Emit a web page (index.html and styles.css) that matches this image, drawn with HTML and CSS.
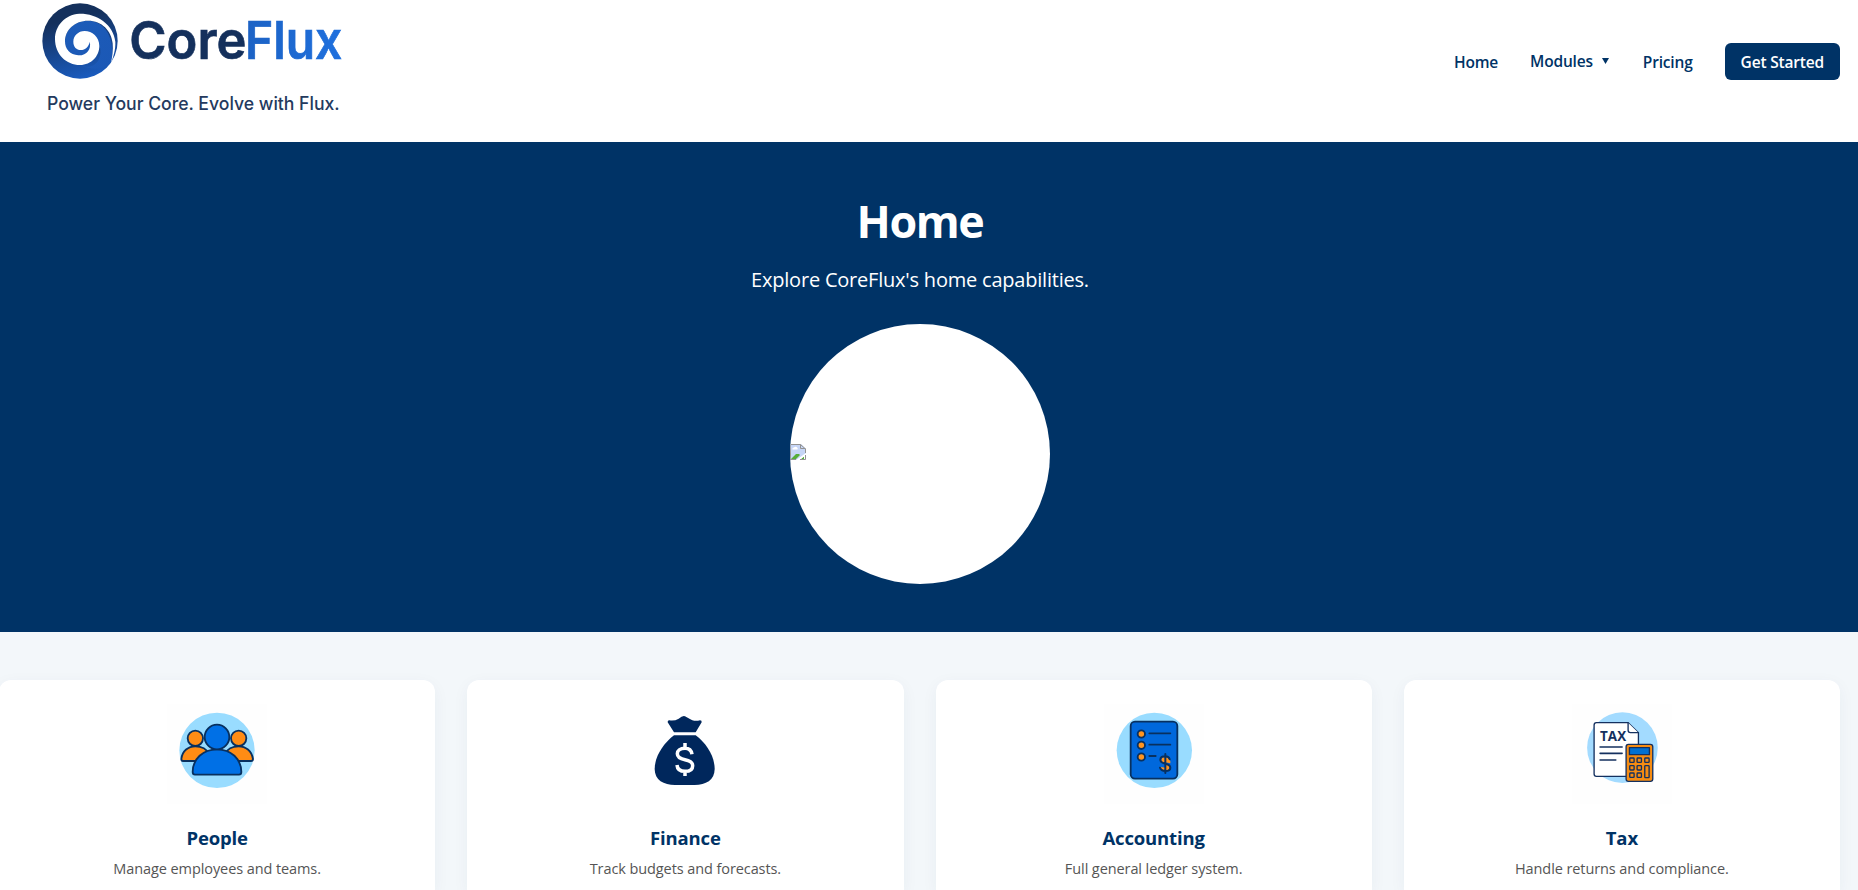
FILE: index.html
```html
<!DOCTYPE html>
<html lang="en">
<head>
<meta charset="utf-8">
<title>CoreFlux</title>
<link rel="stylesheet" href="styles.css">
</head>
<body>
<header class="header">
  <svg class="logo" width="400" height="142" viewBox="0 0 1200 426" role="img" aria-label="CoreFlux">
    <defs>
      <linearGradient id="disc" x1="0.35" y1="0" x2="0.6" y2="1"><stop offset="0.2" stop-color="#14305c"/><stop offset="1" stop-color="#1a5cc0"/></linearGradient>
      <linearGradient id="flux" x1="0" y1="0" x2="1" y2="0"><stop offset="0" stop-color="#1c62c4"/><stop offset="1" stop-color="#1f70de"/></linearGradient>
      <linearGradient id="core" x1="0" y1="0" x2="1" y2="1"><stop offset="0" stop-color="#1d5cb8"/><stop offset="1" stop-color="#1b58b6"/></linearGradient>
    </defs>
    <circle cx="240" cy="123" r="113" fill="url(#disc)"/>
    <path fill="url(#core)" d="M333 186C346 120 320 62 262 62C222 62 195 92 195 125C195 150 212 167 237 166C275 180 300 160 298 135C310 170 290 215 240 195C280 215 325 205 333 186Z"/>
    <path fill="#fff" d="M332 192C340 170 347 150 346 125C340 72 290 40 238 41C194 44 165 78 165 117C165 163 199 195 240 195C274 195 298 168 298 138C298 110 276 93 254 93C234 93 220 108 220 125C220 141 230 150 242 150C256 150 267 139 269 125C275 147 260 167 235 166C210 165 195 147 195 124C195 89 225 62 264 62C306 62 334 92 338 130C340 150 337 172 332 192Z"/>
    <text class="logo-name" x="388" y="177" textLength="351" lengthAdjust="spacingAndGlyphs" fill="#14305c" stroke="#14305c">Core</text>
    <text class="logo-name" x="735" y="177" textLength="292" lengthAdjust="spacingAndGlyphs" fill="url(#flux)" stroke="url(#flux)">Flux</text>
    <text class="logo-tag" x="141" y="329" textLength="878" lengthAdjust="spacingAndGlyphs">Power Your Core. Evolve with Flux.</text>
  </svg>
  <nav class="nav">
    <a class="nav-link">Home</a>
    <a class="nav-link nav-menu">Modules<svg class="caret" width="7" height="6" viewBox="0 0 7 6"><path d="M0 0H7L3.5 6Z" fill="#003366"/></svg></a>
    <a class="nav-link">Pricing</a>
    <a class="nav-button">Get Started</a>
  </nav>
</header>
<section class="hero">
  <h1 class="hero-title">Home</h1>
  <p class="hero-text">Explore CoreFlux's home capabilities.</p>
  <div class="hero-image">
    <svg width="16" height="16" viewBox="0 0 16 16">
      <path d="M0 0H11L16 5V10L10 16H0Z" fill="#c6d5f6"/>
      <path d="M2.500 5.500a1.500 1.500 0 0 1 1.500-2 2 2 0 0 1 3.500.500a1.300 1.300 0 0 1 0 1.500Z" fill="#fff"/>
      <path d="M1 15L6 10L9 10L10 11L6 15ZM11 15L14 12.500V15Z" fill="#56ad39"/>
      <path d="M16 9L6 16H9.500L16 11Z" fill="#fff"/>
      <path d="M0.500 16V0.500H10.500L15.500 5V9M10.500 0.500V4.500H15.500M0 15.500H6M10 15.500H15.500V11" fill="none" stroke="#929292"/>
    </svg>
  </div>
</section>
<main class="cards">
  <article class="card">
    <svg class="icon" viewBox="21 12 300 300">
      <rect x="21" y="12" width="300" height="300" fill="#fefefe"/>
      <circle cx="171" cy="151" r="113" fill="#99dcff"/>
      <g stroke="#08305f" stroke-width="5.500" stroke-linejoin="round">
        <g fill="#ff8c14">
          <circle cx="106" cy="115" r="23"/><circle cx="236" cy="115" r="23"/>
          <path d="M69 183Q64 183 64 177C67 152 85 139 106 139C125 139 141 148 146 162V183Z"/>
          <path d="M273 183Q279 183 279 177C275 152 257 139 236 139C217 139 201 148 196 162V183Z"/>
        </g>
        <g fill="#0070e6">
          <path d="M105 224Q98 224 98 216C98 177 129 148 171 148S244 177 244 216Q244 224 237 224Z"/>
          <circle cx="171" cy="111" r="37"/>
        </g>
      </g>
    </svg>
    <h2 class="card-title">People</h2>
    <p class="card-text">Manage employees and teams.</p>
  </article>
  <article class="card">
    <svg class="icon" viewBox="16 12 300 300">
      <g fill="#00275c">
        <path d="M114 67Q113 61 119 61Q134 64 147 56Q159 46 166 49Q180 57 188 61Q199 64 211 61Q217 61 216 67L198 97H133Z"/>
        <path d="M133 106H198C231 130 255 170 255 207C255 240 228 255 195 255H136C102 255 75 240 75 207C75 170 101 130 133 106Z"/>
      </g>
      <path d="M187 163C185 150 177 145 166 145C151 145 143 152 143 161C143 172 151 176 166 179C181 182 189 187 189 197C189 208 180 214 166 214C152 214 143 208 142 195M166 129V146M166 213V228" fill="none" stroke="#fff" stroke-width="10.500"/>
    </svg>
    <h2 class="card-title">Finance</h2>
    <p class="card-text">Track budgets and forecasts.</p>
  </article>
  <article class="card">
    <svg class="icon" viewBox="27 12 300 300">
      <rect x="27" y="12" width="300" height="300" fill="#fefefe"/>
      <circle cx="178" cy="151" r="113" fill="#99dcff"/>
      <g stroke="#08305f" stroke-width="5.500" stroke-linecap="round">
        <rect x="107" y="65" width="140" height="171" rx="13" fill="#0068dc"/>
        <g fill="#ff9420"><circle cx="139" cy="102" r="11"/><circle cx="139" cy="136" r="11"/><circle cx="139" cy="171" r="11"/></g>
        <path d="M163 100H226M163 134H226M163 168H182"/>
        <path d="M203 172H211V188Q197 188 199 178ZM211 172Q224 174 226 184V190L211 187ZM211 194Q224 195 224 203Q224 211 211 211ZM197 201L211 203V211Q199 211 197 201Z" fill="#ff9420" stroke="none"/>
        <path d="M224 178C222 171 217 169 211 169C202 169 196 173 196 179C196 187 202 189 211 191C221 193 226 196 226 203C226 210 219 213 211 213C202 213 197 209 195 203M211 162V219" fill="none" stroke-width="6"/>
      </g>
    </svg>
    <h2 class="card-title">Accounting</h2>
    <p class="card-text">Full general ledger system.</p>
  </article>
  <article class="card">
    <svg class="icon" viewBox="20.700 12 300 300">
      <rect x="20.700" y="12" width="300" height="300" fill="#fefefe"/>
      <circle cx="172" cy="143" r="106" fill="#a3dbff"/>
      <g stroke="#14305f" stroke-width="4" stroke-linejoin="round" stroke-linecap="round">
        <path d="M94 68H189L220 98V229H94Q87 229 87 222V75Q87 68 94 68Z" fill="#fff"/>
        <path d="M189 68V91Q189 98 196 98H220" fill="#fff"/>
        <path d="M105 141H171M105 160H171M105 180H152" stroke-width="5"/>
        <rect x="183" y="133" width="80" height="111" rx="7" fill="#f68c12"/>
        <rect x="193" y="143" width="60" height="21" fill="#0070d2"/>
        <g fill="#f68c12"><rect x="194" y="174" width="13" height="13" rx="2"/><rect x="216" y="174" width="13" height="13" rx="2"/><rect x="239" y="174" width="13" height="13" rx="2"/><rect x="194" y="197" width="13" height="13" rx="2"/><rect x="216" y="197" width="13" height="13" rx="2"/><rect x="239" y="197" width="13" height="36" rx="2"/><rect x="194" y="219" width="13" height="13" rx="2"/><rect x="216" y="219" width="13" height="13" rx="2"/></g>
      </g>
      <text class="icon-tax" x="105" y="122" textLength="78" lengthAdjust="spacingAndGlyphs">TAX</text>
    </svg>
    <h2 class="card-title">Tax</h2>
    <p class="card-text">Handle returns and compliance.</p>
  </article>
</main>
</body>
</html>
```
FILE: styles.css
```css
* { box-sizing: border-box; }
body { margin: 0; background: #f3f7fa; font-family: "Open Sans", "Noto Sans", sans-serif; color: #003366; }
.header { display: flex; justify-content: space-between; height: 142px; padding-right: 18px; background: #fff; }
.logo { display: block; }
.logo-name { font: 600 157px Inter, sans-serif; stroke-width: 2px; }
.logo-tag { font: 500 54px Inter, sans-serif; fill: #243a5e; }
.nav { display: flex; align-items: center; gap: 32px; height: 123px; font-size: 15.500px; font-weight: 600; line-height: 22px; letter-spacing: -0.180px; }
.nav-link { padding-top: 1px; }
.nav-menu { display: flex; align-items: center; gap: 9px; padding-right: 2px; margin-top: -3px; }
.caret { margin-top: 1px; }
.nav-button { padding: 8px 16px 7px; border-radius: 6px; background: #003366; color: #fff; }
.hero { display: flex; flex-direction: column; align-items: center; height: 490px; padding: 48px 18px 48px 0; background: #003366; color: #fff; }
.hero-title { margin: 0; font-size: 44.800px; line-height: 62px; font-weight: 700; letter-spacing: -1.400px; }
.hero-text { margin: 12px 0 0; font-size: 20px; line-height: 32px; letter-spacing: -0.210px; }
.hero-image { display: flex; align-items: center; width: 260px; height: 260px; margin-top: auto; border-radius: 50%; background: #fff; overflow: hidden; padding-bottom: 4px; }
.cards { display: grid; grid-template-columns: repeat(4, 1fr); gap: 32px; height: 258px; padding: 48px 18px 0 0; margin-left: -1px; overflow: hidden; }
.card { display: flex; flex-direction: column; align-items: center; height: 210px; padding: 24px 24px 0; border-radius: 12px 12px 0 0; background: #fff; box-shadow: 0 4px 16px rgba(0, 51, 102, 0.05); }
.icon { flex: none; width: 100px; height: 100px; }
.icon-tax { font: 700 41px "Open Sans", sans-serif; fill: #14305f; }
.card-title { margin: 21px 0 0; font-size: 18.500px; line-height: 26px; font-weight: 700; letter-spacing: -0.150px; }
.card-text { margin: 6px 0 0; font-size: 14.500px; line-height: 24px; letter-spacing: -0.090px; color: #555; }
```
